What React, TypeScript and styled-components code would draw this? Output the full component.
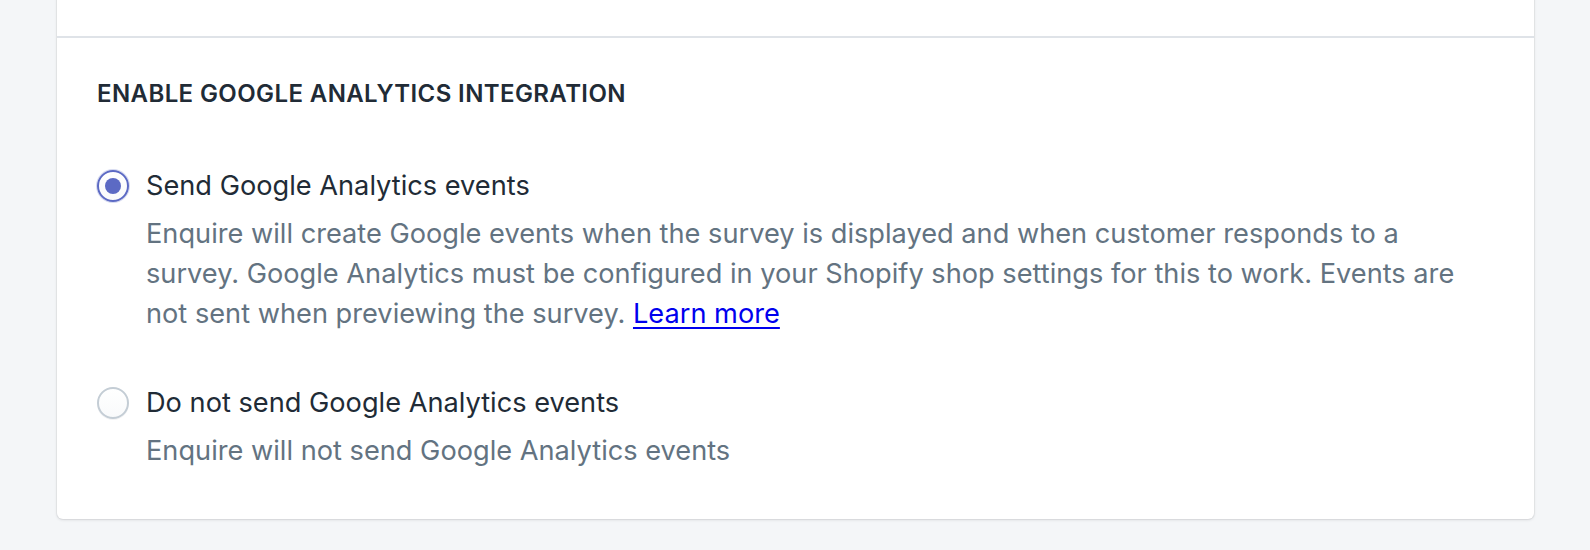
import React, { useState } from 'react';
import styled, { createGlobalStyle } from 'styled-components';

const GlobalStyle = createGlobalStyle`
  html, body {
    margin: 0;
    padding: 0;
    background: #f4f6f8;
  }
  body {
    font-family: Inter, "Noto Sans", "Liberation Sans", sans-serif;
    -webkit-font-smoothing: antialiased;
  }
`;

const Page = styled.div`
  padding: 0 56px 0 57px;
  height: 550px;
  overflow: hidden;
  box-sizing: border-box;
`;

const Card = styled.div`
  margin-top: -20px;
  background: #fff;
  border-radius: 6px;
  box-shadow: 0 0 0 1px rgba(63, 63, 68, 0.05), 0 1px 3px 0 rgba(63, 63, 68, 0.15);
`;

const Section = styled.div<{ $filler?: boolean }>`
  padding: ${(p) => (p.$filler ? '0' : '40px 40px 48px')};
  height: ${(p) => (p.$filler ? '56px' : 'auto')};
  & + & {
    border-top: 2px solid #dfe3e8;
  }
`;

const Heading = styled.h2`
  margin: 0 0 56px;
  font-size: 24px;
  line-height: 32px;
  font-weight: 600;
  text-transform: uppercase;
  letter-spacing: 0.4px;
  color: #212b36;
`;

const Options = styled.ul`
  list-style: none;
  margin: 0;
  padding: 0;
  display: flex;
  flex-direction: column;
  gap: 49px;
`;

const Choice = styled.label`
  display: flex;
  align-items: center;
  gap: 17px;
  cursor: pointer;
`;

const RadioOuter = styled.span<{ $checked: boolean }>`
  flex: none;
  width: 32px;
  height: 32px;
  box-sizing: border-box;
  border-radius: 50%;
  display: flex;
  align-items: center;
  justify-content: center;
  background: linear-gradient(180deg, #fff, #f9fafb);
  border: 2px solid ${(p) => (p.$checked ? '#5c6ac4' : '#c4cdd5')};
  box-shadow: ${(p) => (p.$checked ? '0 0 0 1px rgba(92,106,196,0.25)' : '0 1px 0 0 rgba(22,29,37,0.05)')};
`;

const RadioDot = styled.span`
  width: 16px;
  height: 16px;
  border-radius: 50%;
  background: #5c6ac4;
`;

const Label = styled.span`
  font-size: 27.2px;
  line-height: 40px;
  color: #212b36;
`;

const Description = styled.p`
  margin: 8px 14px 0 49px;
  font-size: 27.2px;
  line-height: 40px;
  color: #637381;
`;

const Link = styled.a`
  color: #0000ee;
  text-decoration: underline;
  text-underline-offset: 4px;
`;

type Option = {
  id: string;
  label: string;
  help: React.ReactNode;
};

const options: Option[] = [
  {
    id: 'send',
    label: 'Send Google Analytics events',
    help: (
      <>
        Enquire will create Google events when the survey is displayed and when customer responds to a survey.
        Google Analytics must be configured in your Shopify shop settings for this to work. Events are not sent when
        previewing the survey. <Link href="#">Learn more</Link>
      </>
    ),
  },
  {
    id: 'none',
    label: 'Do not send Google Analytics events',
    help: 'Enquire will not send Google Analytics events',
  },
];

const App: React.FC = () => {
  const [selected, setSelected] = useState('send');

  return (
    <>
      <GlobalStyle />
      <Page>
        <Card>
          <Section $filler />
          <Section>
            <Heading>Enable Google Analytics integration</Heading>
            <Options>
              {options.map((o) => (
                <li key={o.id}>
                  <Choice onClick={() => setSelected(o.id)}>
                    <RadioOuter $checked={selected === o.id}>
                      {selected === o.id && <RadioDot />}
                    </RadioOuter>
                    <Label>{o.label}</Label>
                  </Choice>
                  <Description>{o.help}</Description>
                </li>
              ))}
            </Options>
          </Section>
        </Card>
      </Page>
    </>
  );
};

export default App;
